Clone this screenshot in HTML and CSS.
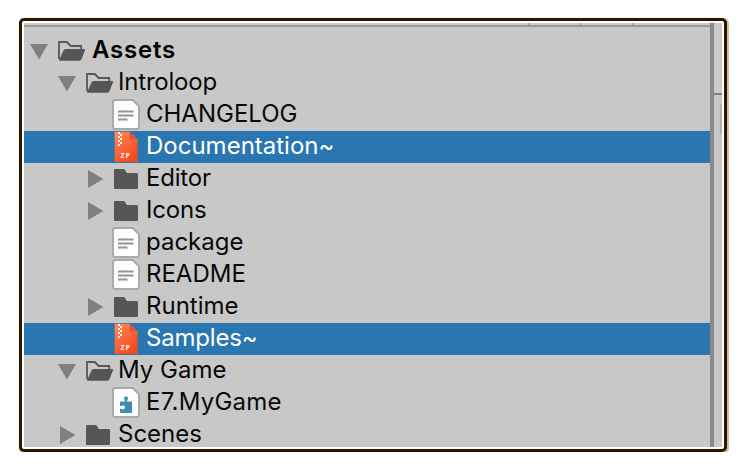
FILE: index.html
```
<!DOCTYPE html>
<html lang="en">
<head>
<meta charset="utf-8">
<title>Assets</title>
<link rel="stylesheet" href="styles.css">
</head>
<body>
<svg class="defs" aria-hidden="true">
  <defs>
    <linearGradient id="zipfill" x1="0" y1="0" x2=".6" y2="1"><stop offset="0" stop-color="#ff8c5c"/><stop offset="1" stop-color="#f9481b"/></linearGradient>
    <symbol id="down" viewBox="0 0 28 32"><path d="M0 9h18l-9 15.500z" fill="#808080"/></symbol>
    <symbol id="right" viewBox="0 0 28 32"><path d="M2 7v18l15.500-9z" fill="#808080"/></symbol>
    <symbol id="open" viewBox="0 0 28 32"><path d="M1 24V7h7.700l4 4H23.200V15" fill="none" stroke="#565656" stroke-width="1.800" stroke-linejoin="round"/><path d="M1 25.300 5.600 15.300Q6.400 14 8 14H26.300Q27.500 14 27 15.200L23.500 24.200Q22.800 25.800 21 25.800H2Q.6 25.800 1 25.300Z" fill="#565656"/></symbol>
    <symbol id="folder" viewBox="0 0 28 32"><path d="M1.300 6H10.300l2.500 4H22.700Q24 10 24 11.300V24.700Q24 26 22.700 26H1.300Q0 26 0 24.700V7.300Q0 6 1.300 6Z" fill="#565656"/></symbol>
    <symbol id="sheet" viewBox="0 0 28 32"><path d="M1.500 1H18.800L25 7.200V27.500Q25 30 22.500 30H1.500Q-1 30-1 27.500V3.500Q-1 1 1.500 1Z" fill="#fdfdfd" stroke="#aaa" stroke-width="2"/></symbol>
    <symbol id="text" viewBox="0 0 28 32"><path d="M4 12.500h15.500M4 16.500h15.500M4 20.500h9.500" stroke="#949494" stroke-width="1.800"/></symbol>
    <symbol id="puzzle" viewBox="0 0 28 32"><path d="M6 15.500q0-1 1-1h3.800v-1.600a2 2 0 1 1 2.400 0v1.600H17q1 0 1 1V25q0 1-1 1H7q-1 0-1-1v-3.200h1.500a2 2 0 1 0 0-2.800H6Z" fill="#418db2"/></symbol>
    <symbol id="zip" viewBox="0 0 28 32"><path d="M.7.7H15.700L23.500 8.500V31H.7Z" fill="url(#zipfill)"/><path d="M15.700.7V8.500H23.500Z" fill="#dd5634"/><path d="M4 1h2v2H4zM6 3h2v2H6zM4 5h2v2H4zM6 7h2v2H6zM4 9h2v2H4zM6 11h2v2H6zM4 13h2v2H4z" fill="#fff0e6"/></symbol>
  </defs>
</svg>
<main class="window">
  <section class="project">
    <div class="tabs"><i></i><i></i><i></i></div>
    <ul class="tree">
      <li class="row root"><svg class="icon"><use href="#down"/></svg><svg class="icon"><use href="#open"/></svg><span>Assets</span></li>
      <li class="row l1"><svg class="icon"><use href="#down"/></svg><svg class="icon"><use href="#open"/></svg><span class="tight">Introloop</span></li>
      <li class="row l2"><svg class="icon"></svg><svg class="icon"><use href="#sheet"/><use href="#text"/></svg><span>CHANGELOG</span></li>
      <li class="row l2 selected"><svg class="icon"></svg><svg class="icon"><use href="#zip"/><text class="ziptext" x="6.500" y="26.500">ZP</text></svg><span>Documentation~</span></li>
      <li class="row l2"><svg class="icon"><use href="#right"/></svg><svg class="icon"><use href="#folder"/></svg><span class="tight">Editor</span></li>
      <li class="row l2"><svg class="icon"><use href="#right"/></svg><svg class="icon"><use href="#folder"/></svg><span class="tight">Icons</span></li>
      <li class="row l2"><svg class="icon"></svg><svg class="icon"><use href="#sheet"/><use href="#text"/></svg><span>package</span></li>
      <li class="row l2"><svg class="icon"></svg><svg class="icon"><use href="#sheet"/><use href="#text"/></svg><span>README</span></li>
      <li class="row l2"><svg class="icon"><use href="#right"/></svg><svg class="icon"><use href="#folder"/></svg><span>Runtime</span></li>
      <li class="row l2 selected"><svg class="icon"></svg><svg class="icon"><use href="#zip"/><text class="ziptext" x="6.500" y="26.500">ZP</text></svg><span class="tight">Samples~</span></li>
      <li class="row l1"><svg class="icon"><use href="#down"/></svg><svg class="icon"><use href="#open"/></svg><span>My Game</span></li>
      <li class="row l2"><svg class="icon"></svg><svg class="icon"><use href="#sheet"/><use href="#puzzle"/></svg><span class="loose">E7.MyGame</span></li>
      <li class="row l1"><svg class="icon"><use href="#right"/></svg><svg class="icon"><use href="#folder"/></svg><span>Scenes</span></li>
    </ul>
  </section>
  <aside class="inspector"><div class="head"></div><div class="button"></div></aside>
</main>
</body>
</html>
```
FILE: styles.css
```
* { box-sizing: border-box; }
body { margin: 0; background: #fff; font-family: Inter, "Liberation Sans", sans-serif; }
.defs { display: block; width: 0; height: 0; }
.window {
  display: flex;
  width: 708px;
  height: 434px;
  margin: 18px 0 0 19px;
  padding: 2px;
  border: 3px solid #2d1600;
  border-radius: 5px;
  background: #fff;
  box-shadow: 1px 1px 1px 1px #cbb8a5;
}
.project { width: 686px; height: 424px; background: #c8c8c8; overflow: hidden; }
.tabs {
  display: flex;
  justify-content: flex-end;
  gap: 50px;
  height: 4px;
  margin-bottom: 8px;
  padding-right: 76px;
  background: #cbcbcb;
  border-bottom: 2px solid #999;
}
.tabs i { width: 2px; height: 2px; background: #aaa; }
.tree { margin: 0; padding: 0; list-style: none; }
.row {
  display: flex;
  height: 32px;
  padding-left: 6px;
  color: #090909;
  font-size: 24px;
  font-weight: 370;
  line-height: 30px;
  white-space: pre;
}
.l1 { padding-left: 34px; }
.l2 { padding-left: 62px; }
.root { color: #000; font-weight: 600; letter-spacing: .8px; }
.selected { background: #2976b1; color: #fff; }
.icon { flex: none; width: 28px; height: 32px; overflow: visible; }
symbol { overflow: visible; }
.row span { margin-left: 4px; }
.root span { margin-left: 6px; }
.tight { letter-spacing: -.2px; }
.loose { letter-spacing: .25px; }
.ziptext { fill: #fff; font: bold 7px "Liberation Mono", monospace; letter-spacing: 1px; }
.inspector { width: 12px; height: 424px; border-left: 4px solid #8a8a8a; background: #c8c8c8; }
.head { height: 72px; background: #cbcbcb; border-bottom: 2px solid #808080; }
.button { width: 2px; height: 32px; margin: 8px 0 0 6px; background: #b0b0b0; border-radius: 2px 0 0 2px; }
```
